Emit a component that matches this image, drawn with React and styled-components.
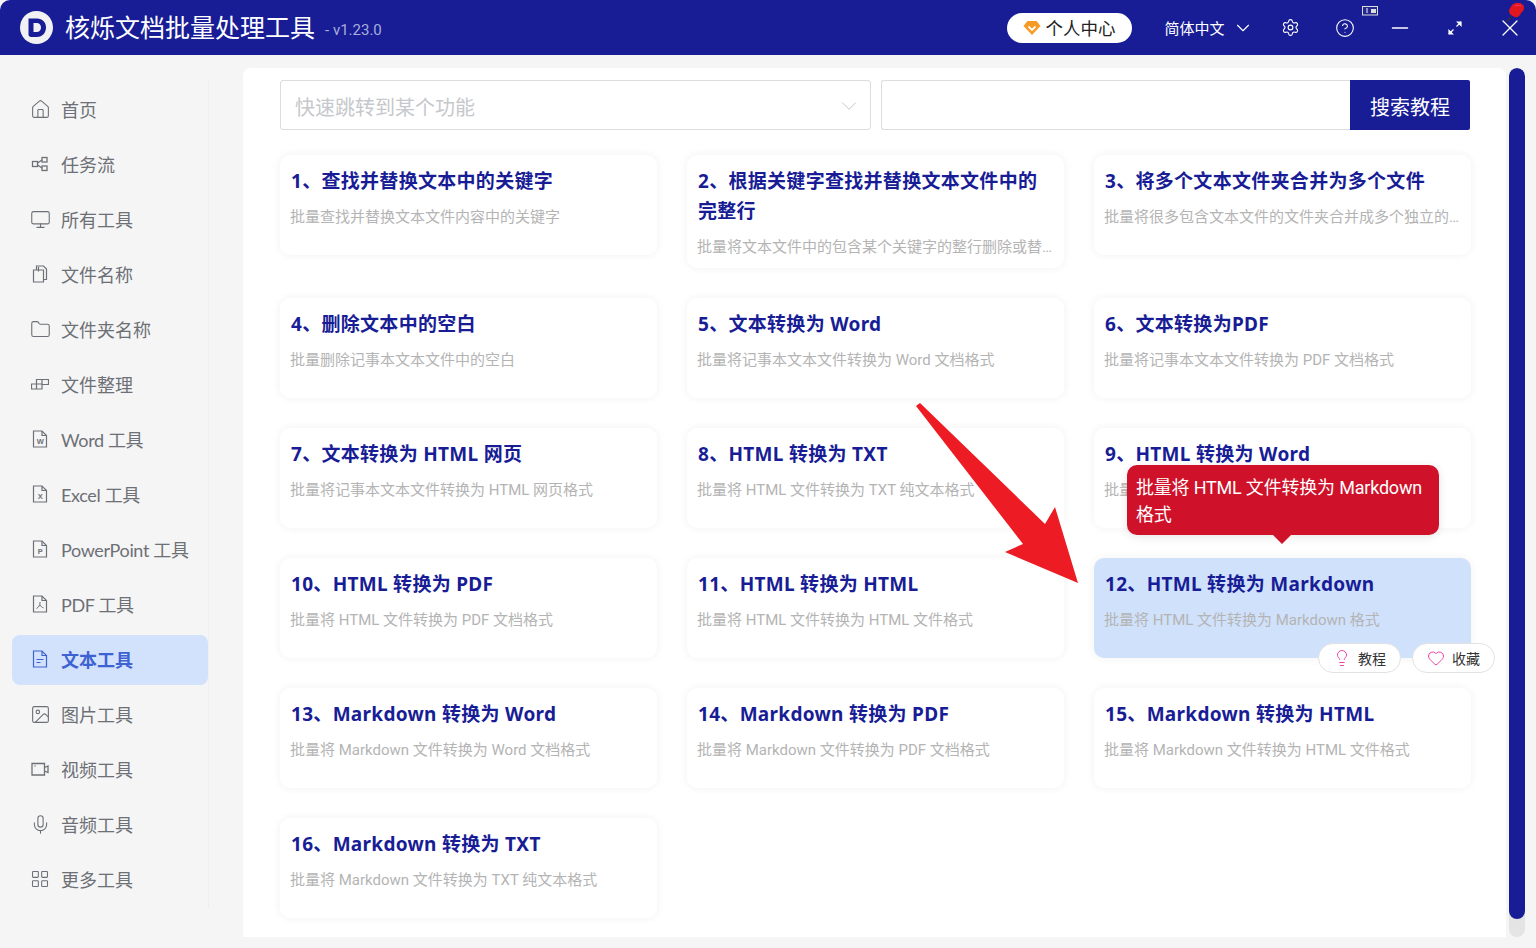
import styled, { createGlobalStyle } from "styled-components"
import {
    House, Monitor, Folder, Image, Mic, LayoutGrid, Settings, CircleHelp,
    Minus, X, ChevronDown, Lightbulb, Heart,
} from "lucide-react"

const navy = "#181d96"

const GlobalStyle = createGlobalStyle`
    html, body { margin: 0; padding: 0; height: 948px; overflow: hidden; background: #f5f5f5; }
    body { font-family: Roboto, "Noto Sans CJK SC", sans-serif; }
    * { box-sizing: border-box; }
`

const FileGlyph = ({ letter, lines, pdf }) => (
    <svg width="18" height="18" viewBox="0 0 18 18" fill="none" stroke="currentColor" strokeWidth="1.2">
        <path d="M2.500 1h8.500l4.500 4.500V17H2.500z" />
        <path d="M11 1v4.500h4.500" />
        {letter && <text x="9" y="14" fontSize="7.500" fontWeight="700" textAnchor="middle" fill="currentColor" stroke="none" fontFamily="Liberation Sans">{letter}</text>}
        {lines && <path d="M5.500 9.500h7M5.500 12.500h4" />}
        {pdf && <path d="M9 7c.5 3-1.500 5.500-3.500 6.500M9 10c1 1.500 2 2.500 3.500 2.800" strokeWidth="1" />}
    </svg>
)

const FlowGlyph = () => (
    <svg width="18" height="18" viewBox="0 0 18 18" fill="none" stroke="currentColor" strokeWidth="1.3">
        <rect x="1.500" y="6.500" width="5" height="5" />
        <rect x="11" y="2.500" width="5" height="4.500" />
        <rect x="11" y="11" width="5" height="4.500" />
        <path d="M6.500 8l4.500-3M6.500 10l4.500 3" />
    </svg>
)

const NamesGlyph = () => (
    <svg width="18" height="18" viewBox="0 0 18 18" fill="none" stroke="currentColor" strokeWidth="1.200">
        <path d="M2.500 5h10v12h-10z" />
        <path d="M5.500 5V1h7l3 3v10.500h-3" />
        <path d="M7.500 2v4.500" />
    </svg>
)

const SortGlyph = () => (
    <svg width="18" height="18" viewBox="0 0 18 18" fill="none" stroke="currentColor" strokeWidth="1.200">
        <path d="M.5 9h10.500v5H.5zM5.500 9v5M5.500 9V4.500h12V9.500H11M11 4.500V9" />
    </svg>
)

const CameraGlyph = () => (
    <svg width="18" height="18" viewBox="0 0 18 18" fill="none" stroke="currentColor" strokeWidth="1.300">
        <path d="M1 3.500h12.500v11.500H1z" />
        <path d="M13.500 7.500l3.500-1.500v6.500l-3.500-1.500" />
        <path d="M3.500 6h1" />
    </svg>
)

const ExpandGlyph = () => (
    <svg width="16" height="16" viewBox="0 0 16 16" fill="#fff" stroke="#fff" strokeWidth="1.200">
        <path d="M14 2l-4.500 4.500M2 14l4.500-4.500" />
        <path d="M14 2v3.500l-3.500-3.500zM2 14v-3.500l3.500 3.500z" />
    </svg>
)

const DiamondGlyph = () => (
    <svg width="18" height="16" viewBox="0 0 18 16">
        <path d="M4.500 1h9L17.500 6 9 15 .5 6z" fill="#f59a23" />
        <path d="M5.500 6.500L9 10l3.500-3.500" fill="none" stroke="#fff" strokeWidth="1.800" />
    </svg>
)

const LogoGlyph = () => (
    <svg width="33" height="33" viewBox="0 0 33 33">
        <circle cx="16.500" cy="16.500" r="16.500" fill="#f1f1f4" />
        <path d="M8.500 7.500h8.500c5.500 0 9 4 9 9s-3.500 9.500-9 9.500H11c-1.500 0-2.500-1-2.500-2.500z" fill={navy} />
        <path d="M13.500 12v9h3.200c2.500 0 4.300-2 4.300-4.500s-1.800-4.500-4.300-4.500z" fill="#f1f1f4" />
    </svg>
)

const menu = [
    { label: "首页", icon: <House size={21} strokeWidth={1.25} /> },
    { label: "任务流", icon: <FlowGlyph /> },
    { label: "所有工具", icon: <Monitor size={21} strokeWidth={1.25} /> },
    { label: "文件名称", icon: <NamesGlyph /> },
    { label: "文件夹名称", icon: <Folder size={21} strokeWidth={1.25} /> },
    { label: "文件整理", icon: <SortGlyph /> },
    { label: "Word 工具", icon: <FileGlyph letter="W" />, tight: true },
    { label: "Excel 工具", icon: <FileGlyph letter="X" />, tight: true },
    { label: "PowerPoint 工具", icon: <FileGlyph letter="P" />, tight: true },
    { label: "PDF 工具", icon: <FileGlyph pdf />, tight: true },
    { label: "文本工具", icon: <FileGlyph lines />, active: true },
    { label: "图片工具", icon: <Image size={21} strokeWidth={1.25} /> },
    { label: "视频工具", icon: <CameraGlyph /> },
    { label: "音频工具", icon: <Mic size={21} strokeWidth={1.25} /> },
    { label: "更多工具", icon: <LayoutGrid size={20} strokeWidth={1.3} /> },
]

const tools = [
    ["1、查找并替换文本中的关键字", "批量查找并替换文本文件内容中的关键字"],
    ["2、根据关键字查找并替换文本文件中的完整行", "批量将文本文件中的包含某个关键字的整行删除或替换为新的内容"],
    ["3、将多个文本文件夹合并为多个文件", "批量将很多包含文本文件的文件夹合并成多个独立的文本文件"],
    ["4、删除文本中的空白", "批量删除记事本文本文件中的空白"],
    ["5、文本转换为 Word", "批量将记事本文本文件转换为 Word 文档格式"],
    ["6、文本转换为PDF", "批量将记事本文本文件转换为 PDF 文档格式"],
    ["7、文本转换为 HTML 网页", "批量将记事本文本文件转换为 HTML 网页格式"],
    ["8、HTML 转换为 TXT", "批量将 HTML 文件转换为 TXT 纯文本格式"],
    ["9、HTML 转换为 Word", "批量将 HTML 文件转换为 Word 文档格式"],
    ["10、HTML 转换为 PDF", "批量将 HTML 文件转换为 PDF 文档格式"],
    ["11、HTML 转换为 HTML", "批量将 HTML 文件转换为 HTML 文件格式"],
    ["12、HTML 转换为 Markdown", "批量将 HTML 文件转换为 Markdown 格式", true],
    ["13、Markdown 转换为 Word", "批量将 Markdown 文件转换为 Word 文档格式"],
    ["14、Markdown 转换为 PDF", "批量将 Markdown 文件转换为 PDF 文档格式"],
    ["15、Markdown 转换为 HTML", "批量将 Markdown 文件转换为 HTML 文件格式"],
    ["16、Markdown 转换为 TXT", "批量将 Markdown 文件转换为 TXT 纯文本格式"],
]

const App = () => {
    return (
        <Windowed>
            <GlobalStyle />
            <Header>
                <Logo><LogoGlyph /></Logo>
                <AppName>核烁文档批量处理工具</AppName>
                <Version>- v1.23.0</Version>
                <HeaderRight>
                    <UserButton><DiamondGlyph />个人中心</UserButton>
                    <Language>简体中文<ChevronDown size={22} strokeWidth={1.2} /></Language>
                    <HeaderIcon><Settings size={19} strokeWidth={1.4} /></HeaderIcon>
                    <HeaderIcon><CircleHelp size={20} strokeWidth={1.3} /></HeaderIcon>
                    <HeaderIcon><Minus size={26} strokeWidth={1.2} /></HeaderIcon>
                    <HeaderIcon><ExpandGlyph /></HeaderIcon>
                    <HeaderIcon><X size={28} strokeWidth={1.1} /></HeaderIcon>
                </HeaderRight>
                <TrayMark>
                    <svg width="16" height="11" viewBox="0 0 16 11">
                        <rect x=".5" y=".5" width="15" height="8.500" fill="#23278f" stroke="#ddd" />
                        <rect x="9" y="3" width="5" height="4" fill="#ddd" />
                        <rect x="4" y="2" width="2" height="5" fill="#8c8fc4" />
                    </svg>
                </TrayMark>
                <PinMark>
                    <svg width="22" height="22" viewBox="0 0 22 22">
                        <path d="M2 20l5-5" stroke="#333" strokeWidth="1.500" />
                        <path d="M8 3c3-3 9-3 11 0 2 2 1 6-2 8-1 3-4 5-6 4-3-1-6-3-6-6 0-2 2-4 3-6z" fill="#e0171f" />
                        <path d="M11 4c2-1 4-1 6 0" stroke="#f37" strokeWidth="1" fill="none" />
                    </svg>
                </PinMark>
            </Header>
            <Body>
                <Sidebar>
                    {menu.map(item => (
                        <NavItem key={item.label} $active={item.active} $tight={item.tight}>
                            <NavIcon>{item.icon}</NavIcon>
                            {item.label}
                        </NavItem>
                    ))}
                </Sidebar>
                <Panel>
                    <SearchRow>
                        <JumpSelect>快速跳转到某个功能<ChevronDown size={26} strokeWidth={0.9} color="#c4c4c4" /></JumpSelect>
                        <SearchInput />
                        <SearchButton>搜索教程</SearchButton>
                    </SearchRow>
                    <ToolGrid>
                        {tools.map(([title, desc, active]) => (
                            <ToolCard key={title} $active={active}>
                                <ToolTitle>{title}</ToolTitle>
                                <ToolDesc>{desc}</ToolDesc>
                                {active && (
                                    <>
                                        <Tooltip>批量将 HTML 文件转换为 Markdown 格式</Tooltip>
                                        <CardActions>
                                            <PillButton><Lightbulb size={18} strokeWidth={1.3} color="#ec3fa0" />教程</PillButton>
                                            <PillButton><Heart size={18} strokeWidth={1.3} color="#ec3fa0" />收藏</PillButton>
                                        </CardActions>
                                    </>
                                )}
                            </ToolCard>
                        ))}
                    </ToolGrid>
                    <RedArrow viewBox="0 0 170 190" width="170" height="190">
                        <path d="M1 4L5 1L130 122L140 105L163 181L90 150L108 142Z" fill="#ed1c24" />
                    </RedArrow>
                </Panel>
                <ScrollTrack><ScrollThumb /></ScrollTrack>
            </Body>
        </Windowed>
    )
}

export default App

const Windowed = styled.div`
    width: 1536px;
    height: 948px;
    background: #f5f5f5;
    display: flex;
    flex-direction: column;
    border-radius: 10px;
    overflow: hidden;
`

const Header = styled.header`
    position: relative;
    height: 55px;
    flex: none;
    background: ${navy};
    color: #fff;
    display: flex;
    align-items: center;
    padding-left: 20px;
`

const Logo = styled.div`
    width: 33px;
    height: 33px;
    line-height: 0;
`

const AppName = styled.div`
    font-size: 25px;
    line-height: 32px;
    margin: 3px 0 0 12px;
`

const Version = styled.div`
    font-size: 15px;
    color: #a9aeda;
    margin-left: 10px;
    margin-top: 5px;
`

const HeaderRight = styled.div`
    margin-left: auto;
    margin-right: -1.5px;
    display: flex;
    align-items: center;
    height: 100%;
`

const UserButton = styled.div`
    width: 125px;
    height: 30px;
    margin-right: 33px;
    border-radius: 15px;
    background: #fff;
    color: #222;
    font-size: 17.5px;
    display: flex;
    align-items: center;
    gap: 5px;
    padding-left: 16px;
`

const Language = styled.div`
    display: flex;
    align-items: center;
    gap: 7px;
    font-size: 15px;
    width: 98px;
`

const HeaderIcon = styled.div`
    width: 55px;
    display: flex;
    justify-content: center;
`

const TrayMark = styled.div`
    position: absolute;
    left: 1362px;
    top: 6px;
    line-height: 0;
`

const PinMark = styled.div`
    position: absolute;
    left: 1504px;
    top: 2px;
    line-height: 0;
`

const Body = styled.div`
    flex: 1;
    display: flex;
    min-height: 0;
    align-items: flex-start;
`

const Sidebar = styled.nav`
    width: 209px;
    height: 828px;
    margin-top: 25px;
    padding: 5px 0 0 12px;
    border-right: 1px solid #eeeeee;
    display: flex;
    flex-direction: column;
    gap: 5px;
`

const NavItem = styled.div`
    height: 50px;
    flex: none;
    display: flex;
    align-items: center;
    padding: 0 0 2px 19px;
    gap: 12px;
    border-radius: 8px;
    font-family: Lato, "Noto Sans CJK SC", sans-serif;
    font-size: 18px;
    letter-spacing: ${p => (p.$tight ? "-.35px" : "0")};
    color: ${p => (p.$active ? "#3f62d3" : "#6d7076")};
    font-weight: ${p => (p.$active ? 700 : 400)};
    background: ${p => (p.$active ? "#d2e2fc" : "transparent")};
`

const NavIcon = styled.span`
    width: 18px;
    height: 18px;
    flex: none;
    display: flex;
    align-items: center;
    justify-content: center;
    & > svg { flex: none; }
`

const Panel = styled.main`
    position: relative;
    width: 1263px;
    height: 869px;
    margin: 13px 0 0 34px;
    padding: 12px 36px 0 37px;
    background: #fff;
    border-radius: 8px 8px 0 0;
`

const SearchRow = styled.div`
    display: flex;
    height: 50px;
`

const JumpSelect = styled.div`
    width: 591px;
    margin-right: 10px;
    border: 1px solid #dcdcdc;
    border-radius: 3px;
    display: flex;
    align-items: center;
    justify-content: space-between;
    padding: 2px 8px 0 14px;
    font-size: 20px;
    color: #c6c8cc;
`

const SearchInput = styled.div`
    flex: 1;
    border: 1px solid #dcdcdc;
    border-right: 0;
    border-radius: 3px 0 0 3px;
`

const SearchButton = styled.div`
    width: 120px;
    padding-top: 2px;
    background: ${navy};
    color: #fff;
    font-size: 20px;
    border-radius: 0 2px 2px 0;
    display: flex;
    align-items: center;
    justify-content: center;
`

const ToolGrid = styled.div`
    margin-top: 25px;
    width: 1191px;
    display: grid;
    grid-template-columns: repeat(3, 377px);
    column-gap: 30px;
    row-gap: 30px;
    align-items: start;
`

const ToolCard = styled.div`
    position: relative;
    min-height: 100px;
    padding: 11px 11px 11px 11px;
    border-radius: 10px;
    background: ${p => (p.$active ? "#d0e1fb" : "#fff")};
    box-shadow: 0 0 10px rgba(0, 0, 0, .06);
`

const ToolTitle = styled.div`
    font-family: "Noto Sans", "Noto Sans CJK SC", sans-serif;
    font-size: 19px;
    line-height: 30px;
    font-weight: 700;
    letter-spacing: .3px;
    color: ${navy};
`

const ToolDesc = styled.div`
    margin: 10px 0 0 -1px;
    padding-top: 1px;
    height: 21px;
    font-size: 15px;
    line-height: 20px;
    color: #b4b4b4;
    white-space: nowrap;
    overflow: hidden;
    text-overflow: ellipsis;
`

const Tooltip = styled.div`
    position: absolute;
    left: 33px;
    top: -93px;
    width: 312px;
    height: 70px;
    padding: 9px 9px;
    border-radius: 10px;
    background: #cf1129;
    color: #fff;
    font-size: 18px;
    line-height: 27px;
    letter-spacing: -.2px;
    box-shadow: 0 2px 10px rgba(0, 0, 0, .1);
    &::after {
        content: "";
        position: absolute;
        left: 146px;
        bottom: -9px;
        border: 9px solid transparent;
        border-bottom: 0;
        border-top-color: #cf1129;
    }
`

const CardActions = styled.div`
    position: absolute;
    top: 85px;
    left: 224px;
    display: flex;
    gap: 11px;
`

const PillButton = styled.div`
    width: 83px;
    height: 30px;
    border: 1px solid #e2e2e2;
    border-radius: 15px;
    background: #fff;
    color: #333;
    font-size: 14px;
    display: flex;
    align-items: center;
    justify-content: center;
    gap: 7px;
`

const RedArrow = styled.svg`
    position: absolute;
    left: 672px;
    top: 334px;
`

const ScrollTrack = styled.div`
    width: 16px;
    height: 869px;
    margin: 13px 0 0 3px;
    border-radius: 8px;
    background: #e4e4e4;
    overflow: hidden;
`

const ScrollThumb = styled.div`
    height: 851px;
    border-radius: 8px;
    background: ${navy};
`
